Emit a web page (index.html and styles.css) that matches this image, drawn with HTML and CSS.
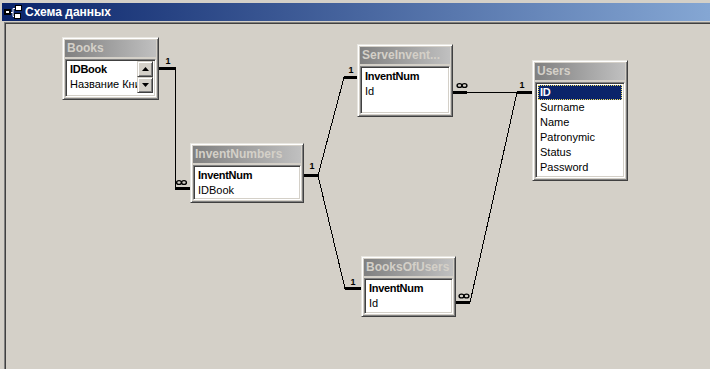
FILE: index.html
```html
<!DOCTYPE html>
<html lang="ru">
<head>
<meta charset="utf-8">
<title>Схема данных</title>
<link rel="stylesheet" href="styles.css">
</head>
<body>
<div class="window">
  <div class="titlebar">
    <svg class="ticon" width="18" height="14" viewBox="0 0 18 14">
      <path d="M6 7.5 H9 M9 3.5 V11.5 M9 3.5 H11 M9 11.5 H10" stroke="#fff" stroke-width="1" fill="none"/>
      <rect x="0.5" y="4.5" width="6" height="5" fill="#000" stroke="#000"/>
      <rect x="2" y="6" width="3" height="2" fill="#fff"/>
      <rect x="11.5" y="0.5" width="6" height="5" fill="#fff" stroke="#000"/>
      <rect x="10.5" y="8.5" width="6" height="5" fill="#fff" stroke="#000"/>
    </svg>
    <span class="ttext">Схема данных</span>
  </div>
  <div class="canvas">
    <svg class="links" width="705" height="346" viewBox="0 0 705 346" shape-rendering="crispEdges">
      <g stroke="#000" fill="none">
        <path d="M170.5 45 V166 M313 152.5 L339 54.5 M313 152.5 L340 265.5 M462 69.5 H512 M512 69.5 L465 279.5" stroke-width="1"/>
        <path d="M154 45.5 H171 M170 165.5 H185 M299 152.5 H313 M339 54.5 H352 M340 265.5 H356 M448 69.5 H462 M512 69.5 H527 M451 279.5 H465" stroke-width="3"/>
      </g>
      <g class="inf" stroke="#000" stroke-width="1.4" fill="none" shape-rendering="auto">
        <ellipse cx="174" cy="159.5" rx="2.4" ry="1.9"/><ellipse cx="179" cy="159.5" rx="2.4" ry="1.9"/>
        <ellipse cx="454.5" cy="62.5" rx="2.4" ry="1.9"/><ellipse cx="459.5" cy="62.5" rx="2.4" ry="1.9"/>
        <ellipse cx="456.5" cy="273" rx="2.4" ry="1.9"/><ellipse cx="461.5" cy="273" rx="2.4" ry="1.9"/>
      </g>
      <g class="one" shape-rendering="auto">
        <text x="163" y="41">1</text>
        <text x="307" y="146">1</text>
        <text x="346" y="50">1</text>
        <text x="348" y="262">1</text>
        <text x="517" y="65">1</text>
      </g>
    </svg>

    <div class="tbl t-books">
      <div class="cap">Books</div>
      <div class="list">
        <div class="fields">
          <div class="f pk">IDBook</div>
          <div class="f">Название Книги</div>
        </div>
        <div class="sb">
          <div class="sbtn"><svg width="7" height="4" viewBox="0 0 7 4"><path d="M3.5 0 L7 4 H0 Z" fill="#000"/></svg></div>
          <div class="sbtn"><svg width="7" height="4" viewBox="0 0 7 4"><path d="M0 0 H7 L3.5 4 Z" fill="#000"/></svg></div>
        </div>
      </div>
    </div>

    <div class="tbl t-invent">
      <div class="cap">InventNumbers</div>
      <div class="list">
        <div class="fields">
          <div class="f pk">InventNum</div>
          <div class="f">IDBook</div>
        </div>
      </div>
    </div>

    <div class="tbl t-serve">
      <div class="cap">ServeInvent...</div>
      <div class="list">
        <div class="fields">
          <div class="f pk">InventNum</div>
          <div class="f">Id</div>
        </div>
      </div>
    </div>

    <div class="tbl t-users">
      <div class="cap">Users</div>
      <div class="list">
        <div class="fields">
          <div class="f pk sel">ID</div>
          <div class="f">Surname</div>
          <div class="f">Name</div>
          <div class="f">Patronymic</div>
          <div class="f">Status</div>
          <div class="f">Password</div>
        </div>
      </div>
    </div>

    <div class="tbl t-bou">
      <div class="cap">BooksOfUsers</div>
      <div class="list">
        <div class="fields">
          <div class="f pk">InventNum</div>
          <div class="f">Id</div>
        </div>
      </div>
    </div>
  </div>
</div>
</body>
</html>
```
FILE: styles.css
```css
html, body {
  margin: 0;
  padding: 0;
}
body {
  width: 710px;
  height: 369px;
  overflow: hidden;
  background: #d4d0c8;
  font-family: "Liberation Sans", Arial, sans-serif;
}
.window {
  box-sizing: border-box;
  height: 369px;
  padding: 3px 0 0 2px;
  display: flex;
  flex-direction: column;
}
.titlebar {
  height: 18px;
  flex: none;
  margin-bottom: 1px;
  display: flex;
  align-items: center;
  gap: 3px;
  padding-left: 2px;
  background: linear-gradient(to right, #0a246a 0, #a6caf0 900px);
  background-size: 900px 100%;
  background-repeat: no-repeat;
  background-color: #a6caf0;
}
.ticon {
  display: block;
  flex: none;
}
.ttext {
  color: #fff;
  font-weight: bold;
  font-size: 12px;
  line-height: 18px;
  white-space: nowrap;
}
.canvas {
  position: relative;
  flex: 1;
  margin-left: 2px;
  border-top: 1px solid #808080;
  border-left: 1px solid #808080;
  box-shadow: inset 1px 1px #404040;
  background: #d4d0c8;
}
.links {
  position: absolute;
  left: 0;
  top: 0;
  display: block;
}
.one text {
  font-family: "Liberation Sans", Arial, sans-serif;
  font-weight: bold;
  font-size: 9px;
  fill: #000;
  text-anchor: middle;
}

.tbl {
  position: absolute;
  box-sizing: border-box;
  display: flex;
  flex-direction: column;
  gap: 2px;
  padding: 2px;
  background: #d4d0c8;
  border: 1px solid;
  border-color: #e8e6e0 #404040 #404040 #e8e6e0;
  box-shadow: inset 1px 1px #ffffff, inset -1px -1px #808080;
}
.t-books { left: 57px; top: 14px; width: 97px; height: 63px; }
.t-invent { left: 185px; top: 120px; width: 114px; height: 60px; }
.t-serve { left: 352px; top: 21px; width: 96px; height: 73px; }
.t-users { left: 527px; top: 37px; width: 96px; height: 121px; }
.t-bou { left: 356px; top: 233px; width: 95px; height: 61px; }

.cap {
  flex: none;
  height: 17px;
  line-height: 17px;
  padding-left: 2px;
  background: linear-gradient(to right, #808080, #c0c0c0);
  color: #d4d0c8;
  font-weight: bold;
  font-size: 12px;
  white-space: nowrap;
  overflow: hidden;
}
.list {
  flex: 1;
  min-height: 0;
  display: flex;
  padding: 2px 2px 2px 2px;
  background: #fff;
  border: 1px solid;
  border-color: #808080 #ffffff #ffffff #808080;
  box-shadow: inset 1px 1px #404040, inset -1px -1px #d4d0c8;
  overflow: hidden;
}
.fields {
  flex: 1;
  min-width: 0;
  display: flex;
  flex-direction: column;
}
.f {
  height: 15px;
  line-height: 15px;
  font-size: 11px;
  color: #000;
  padding-left: 2px;
  white-space: nowrap;
  overflow: hidden;
}
.f.pk {
  font-weight: bold;
  letter-spacing: -0.3px;
}
.f.sel {
  background: #0a246a;
  color: #fff;
  outline: 1px dotted #f0e060;
  outline-offset: -1px;
}
.sb {
  flex: none;
  width: 16px;
  display: flex;
  flex-direction: column;
  margin: -1px 0 0 0;
}
.sbtn {
  box-sizing: border-box;
  width: 16px;
  height: 16px;
  display: flex;
  align-items: center;
  justify-content: center;
  background: #d4d0c8;
  border: 1px solid;
  border-color: #d4d0c8 #404040 #404040 #d4d0c8;
  box-shadow: inset 1px 1px #ffffff, inset -1px -1px #808080;
}
.sbtn svg {
  display: block;
}
```
